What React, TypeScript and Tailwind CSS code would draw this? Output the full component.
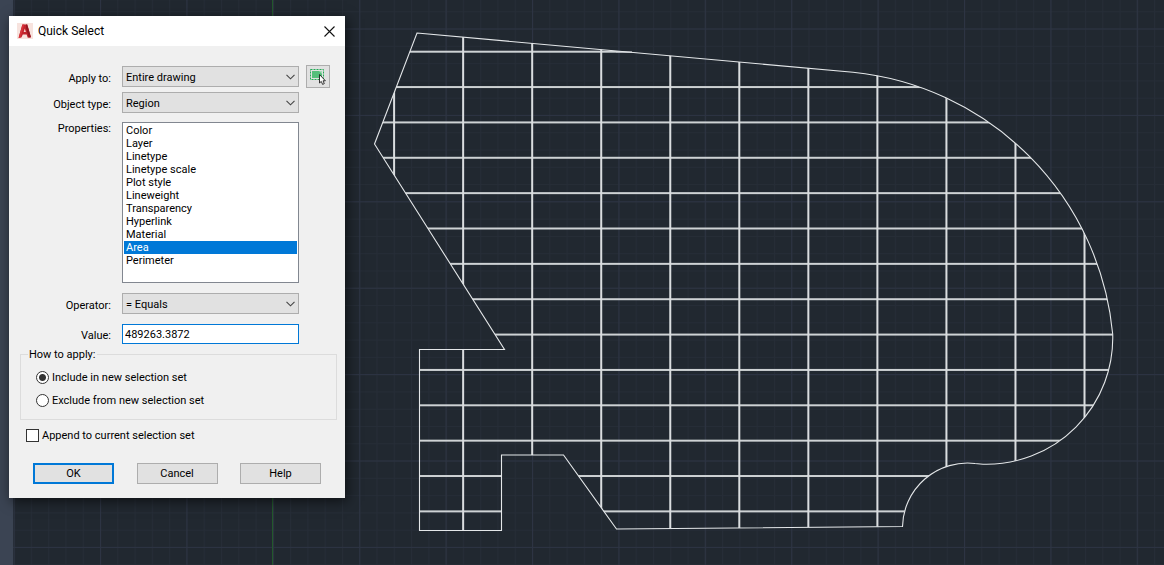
import { useState } from "react";
import type { ReactNode } from "react";

const PROPERTIES = [
  "Color",
  "Layer",
  "Linetype",
  "Linetype scale",
  "Plot style",
  "Lineweight",
  "Transparency",
  "Hyperlink",
  "Material",
  "Area",
  "Perimeter",
];

const OUTLINE =
  "M417 33 L853 72.3 A290.4 290.4 0 0 1 1112.7 334 A126.3 126.3 0 0 1 983 464.2 L975 463.5 A65 65 0 0 0 902.5 526.5 L616.5 529 L563.5 455 L501.5 455 L501.5 530.5 L419.5 530.5 L419.5 349.5 L504.5 349.5 L374.5 144 Z";

// centres of the cutting lines inside the region
const COLUMNS = Array.from({ length: 11 }, (_, i) => 394.1 + i * 69.04);
const ROWS = Array.from({ length: 14 }, (_, i) => 51.7 + i * 35.36);

function Canvas() {
  return (
    <svg className="absolute inset-0 h-full w-full" aria-hidden="true">
      <defs>
        <pattern id="minor" x="13.6" y="11.3" width="17.28" height="17.28" patternUnits="userSpaceOnUse">
          <path d="M0.5 0V17.28M0 0.5H17.28" stroke="#262d37" strokeWidth="1" fill="none" />
        </pattern>
        <pattern id="major" x="13.6" y="28.5" width="86.4" height="86.4" patternUnits="userSpaceOnUse">
          <path d="M0.5 0V86.4M0 0.5H86.4" stroke="#2d3443" strokeWidth="1" fill="none" />
        </pattern>
        <clipPath id="region">
          <path d={OUTLINE} />
        </clipPath>
      </defs>
      <rect width="100%" height="100%" fill="url(#minor)" />
      <rect width="100%" height="100%" fill="url(#major)" />
      <rect x="272" width="1" height="100%" fill="#23592c" />
      <rect width="13" height="100%" fill="#3b4453" />
      <g clipPath="url(#region)">
        {ROWS.map((y) => (
          <rect key={y} x="370" y={y - 1} width="750" height="2" fill="#ced2d4" />
        ))}
        {COLUMNS.map((x) => (
          <rect key={x} x={x - 1} y="30" width="2" height="505" fill="#dadddf" />
        ))}
      </g>
      <path d="M616 51.9H632" stroke="#c9cdd0" />
      <path d={OUTLINE} fill="none" stroke="#e4e7e9" strokeWidth="1.1" />
    </svg>
  );
}

function Row({ label, htmlFor, children }: { label: string; htmlFor: string; children: ReactNode }) {
  return (
    <div className="flex items-center">
      <label htmlFor={htmlFor} className="w-[113px] pt-[3px] pr-[11px] text-right">
        {label}
      </label>
      {children}
    </div>
  );
}

function DropDown({ id, options }: { id: string; options: string[] }) {
  return (
    <div className="relative h-[21px] w-[177px]">
      <select
        id={id}
        className="block h-full w-full appearance-none border border-[#adadad] bg-[#e1e1e1] pt-px pl-[3px] outline-none"
      >
        {options.map((o) => (
          <option key={o}>{o}</option>
        ))}
      </select>
      <svg className="pointer-events-none absolute top-2 right-1 h-[6px] w-[9px]" viewBox="0 0 9 6" fill="none">
        <path d="M0.5 0.8L4.5 4.8L8.5 0.8" stroke="#444" strokeWidth="1.1" />
      </svg>
    </div>
  );
}

function AppIcon() {
  return (
    <svg width="16" height="16" viewBox="0 0 16 16">
      <rect width="16" height="16" fill="#f7e3de" />
      <path d="M5.4 1.5H10.2L14 14.2L10.8 14.8L9.6 11.6H5.8L4.4 14.6L1.6 14.8Z" fill="#c2232c" />
      <path d="M9 1.5H10.2L14 14.2L11.8 14.6L9.2 6Z" fill="#931722" />
      <path d="M5.4 1.5H7.4L3.4 14.7L1.6 14.8Z" fill="#d8333b" />
      <path d="M7.8 5.5L8.9 9H6.7Z" fill="#f5d5d0" />
    </svg>
  );
}

function PickIcon() {
  return (
    <svg width="17" height="17" viewBox="0 0 17 17">
      <rect x="0.5" y="1.5" width="13" height="10" fill="none" stroke="#21ab55" strokeDasharray="2 1" />
      <rect x="2" y="3" width="10" height="7" fill="#54bf7b" />
      <path d="M9 3H12V6Z" fill="#a6dcb8" />
      <path
        d="M9.5 6.5V15L11.3 13.4L12.6 16.4L14.3 15.6L13 12.8H15.4Z"
        fill="#fff"
        stroke="#1d1d1d"
        strokeWidth="0.9"
      />
    </svg>
  );
}

const radioClass =
  "size-[13px] appearance-none rounded-full border border-[#333] bg-white checked:bg-[radial-gradient(circle,#333_0_3px,#fff_4px)]";
const buttonClass = "h-[21px] w-[81px] border border-[#adadad] bg-[#e1e1e1]";

export default function App() {
  const [property, setProperty] = useState("Area");
  const [value, setValue] = useState("489263.3872");
  const [mode, setMode] = useState("include");
  const [append, setAppend] = useState(false);

  return (
    <main className="relative min-h-screen overflow-hidden bg-[#212830]">
      <Canvas />
      <section
        role="dialog"
        aria-labelledby="title"
        className="absolute top-4 left-[9px] w-[336px] bg-[#f0f0f0] font-[Roboto,sans-serif] text-[11px] leading-[13px] text-black shadow-[2px_3px_12px_rgba(0,0,0,0.6)]"
      >
        <header className="flex h-[30px] items-center bg-white pr-[10px] pl-2">
          <AppIcon />
          <h1 id="title" className="ml-[5px] flex-1 text-[12px]">
            Quick Select
          </h1>
          <button type="button" aria-label="Close">
            <svg width="11" height="11" viewBox="0 0 11 11">
              <path d="M0.5 0.5L10.5 10.5M10.5 0.5L0.5 10.5" stroke="#111" strokeWidth="1.1" />
            </svg>
          </button>
        </header>

        <form className="pt-[19px] pb-[14px]" onSubmit={(e) => e.preventDefault()}>
          <Row label="Apply to:" htmlFor="apply">
            <DropDown id="apply" options={["Entire drawing", "Current selection"]} />
            <button
              type="button"
              aria-label="Select objects"
              className="ml-[7px] flex h-[23px] w-6 justify-center border border-[#adadad] bg-[#e1e1e1] pt-[2px]"
            >
              <PickIcon />
            </button>
          </Row>
          <div className="mt-1">
            <Row label="Object type:" htmlFor="type">
              <DropDown id="type" options={["Region", "Multiple"]} />
            </Row>
          </div>
          <div className="mt-[9px] flex">
            <label htmlFor="properties" className="w-[113px] pr-[11px] text-right">
              Properties:
            </label>
            <select
              id="properties"
              size={11}
              value={property}
              onChange={(e) => setProperty(e.target.value)}
              className="h-[161px] w-[177px] appearance-none overflow-hidden border border-[#828790] bg-white px-px py-px outline-none"
            >
              {PROPERTIES.map((p) => (
                <option
                  key={p}
                  value={p}
                  className="h-[13px] min-h-0 p-0 pl-[2px] leading-[13px] checked:bg-[linear-gradient(#0078d7,#0078d7)] checked:text-white!"
                >
                  {p}
                </option>
              ))}
            </select>
          </div>
          <div className="mt-[10px]">
            <Row label="Operator:" htmlFor="operator">
              <DropDown id="operator" options={["= Equals", "<> Not Equal"]} />
            </Row>
          </div>
          <div className="mt-[10px]">
            <Row label="Value:" htmlFor="value">
              <input
                id="value"
                value={value}
                onChange={(e) => setValue(e.target.value)}
                className="h-5 w-[177px] border border-[#0078d7] bg-white px-[2px] outline-none"
              />
            </Row>
          </div>

          <fieldset className="mt-1 mr-2 ml-[11px] border border-[#dcdcdc] px-[15px] pt-[10px] pb-3">
            <legend className="-ml-2 px-px">How to apply:</legend>
            <label className="flex items-center gap-[3px]">
              <input
                type="radio"
                name="mode"
                checked={mode === "include"}
                onChange={() => setMode("include")}
                className={radioClass}
              />
              Include in new selection set
            </label>
            <label className="mt-[10px] flex items-center gap-[3px]">
              <input
                type="radio"
                name="mode"
                checked={mode === "exclude"}
                onChange={() => setMode("exclude")}
                className={radioClass}
              />
              Exclude from new selection set
            </label>
          </fieldset>

          <label className="mt-[9px] ml-[17px] flex w-fit items-center gap-[3px]">
            <input
              type="checkbox"
              checked={append}
              onChange={(e) => setAppend(e.target.checked)}
              className="size-[13px] appearance-none border border-[#333] bg-white checked:bg-[#333]"
            />
            Append to current selection set
          </label>

          <div className="mt-[21px] flex justify-between pr-6 pl-6">
            <button type="submit" className="h-[21px] w-[81px] border-2 border-[#0078d7] bg-[#e1e1e1]">
              OK
            </button>
            <button type="button" className={buttonClass}>
              Cancel
            </button>
            <button type="button" className={buttonClass}>
              Help
            </button>
          </div>
        </form>
      </section>
    </main>
  );
}
